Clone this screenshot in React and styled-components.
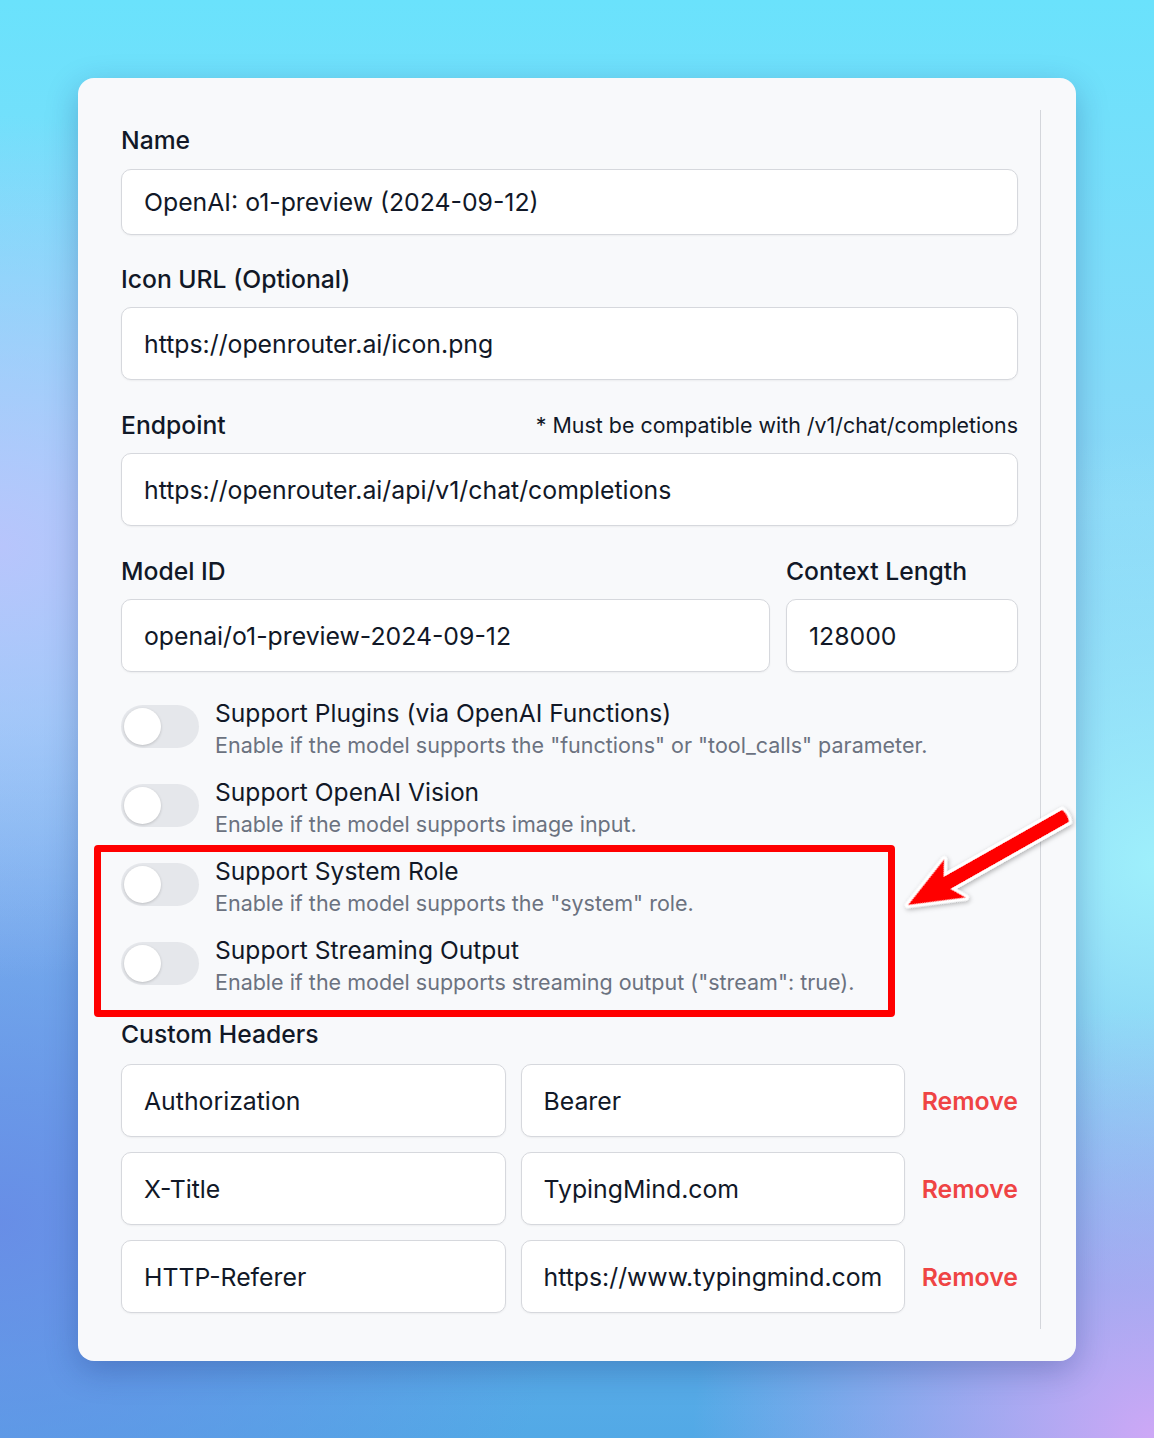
import React from 'react';
import styled, { createGlobalStyle } from 'styled-components';

const GlobalStyle = createGlobalStyle`
  * { box-sizing: border-box; }
  html, body { margin: 0; padding: 0; }
  body {
    font-family: Inter, "Noto Sans", "Liberation Sans", sans-serif;
    color: #111827;
    background:
      radial-gradient(ellipse 45% 30% at 0% 38%, rgba(186, 196, 252, 0.95), rgba(186, 196, 252, 0) 100%),
      radial-gradient(ellipse 50% 35% at 0% 85%, rgba(104, 140, 230, 0.95), rgba(104, 140, 230, 0) 100%),
      radial-gradient(ellipse 40% 30% at 100% 100%, rgba(206, 168, 246, 1), rgba(206, 168, 246, 0) 100%),
      radial-gradient(ellipse 35% 30% at 100% 60%, rgba(160, 242, 252, 0.95), rgba(160, 242, 252, 0) 100%),
      linear-gradient(180deg, #6ae2fc 0%, #8cd9f8 35%, #7cbcf0 65%, #52a9e6 100%);
  }
`;

const Page = styled.div`
  min-height: 1438px;
  padding: 78px 78px 78px;
`;

const Card = styled.div`
  position: relative;
  width: 998px;
  background: #f8f9fb;
  border-radius: 16px;
  box-shadow: 0 10px 32px rgba(20, 40, 110, 0.28);
  padding: 32px 35px 32px 43px;
  display: flex;
  gap: 22px;
`;

const Content = styled.div`
  flex: 1;
  padding: 15px 0 16px;
`;

const ScrollTrack = styled.div`
  width: 1px;
  background: #d4d6db;
`;

const Field = styled.div`
  margin-bottom: ${({ gap }) => gap ?? 29}px;
`;

const LabelRow = styled.div`
  display: flex;
  justify-content: space-between;
  align-items: center;
  margin-bottom: ${({ gap }) => gap ?? 13}px;
`;

const Label = styled.div`
  font-size: 24.7px;
  font-weight: 500;
  line-height: 30px;
  color: #111827;
`;

const Note = styled.div`
  font-size: 21.4px;
  line-height: 30px;
  color: #111827;
`;

const Input = styled.div`
  height: ${({ h }) => h ?? 73}px;
  display: flex;
  align-items: center;
  padding: 0 22px;
  background: #ffffff;
  border: 1px solid #d6d8dd;
  border-radius: 10px;
  box-shadow: 0 1px 2px rgba(0, 0, 0, 0.05);
  font-size: 24.8px;
  color: #111827;
  white-space: nowrap;
  overflow: hidden;
`;

const TwoCol = styled.div`
  display: grid;
  grid-template-columns: 1fr 232px;
  column-gap: 16px;
`;

const ToggleList = styled.div`
  display: flex;
  flex-direction: column;
  gap: 15px;
  margin-top: 26px;
`;

const Highlight = styled.div`
  position: relative;
  display: flex;
  flex-direction: column;
  gap: 15px;

  &::after {
    content: '';
    position: absolute;
    top: -11px;
    bottom: -18px;
    left: -27px;
    right: 123px;
    border: 7px solid #ff0000;
    border-radius: 4px;
    pointer-events: none;
  }
`;

const ToggleRow = styled.div`
  display: flex;
  gap: 16px;
  align-items: flex-start;
`;

const Switch = styled.div`
  flex: none;
  width: 78px;
  height: 43px;
  margin-top: 7px;
  border-radius: 22px;
  background: #e5e7eb;
  display: flex;
  align-items: center;
  padding: 0 3px;
`;

const Knob = styled.div`
  width: 37px;
  height: 37px;
  border-radius: 50%;
  background: #ffffff;
  box-shadow: 0 1px 3px rgba(0, 0, 0, 0.18);
`;

const ToggleText = styled.div`
  display: flex;
  flex-direction: column;
`;

const ToggleTitle = styled.div`
  font-size: 24.6px;
  line-height: 30px;
  color: #111827;
`;

const ToggleDesc = styled.div`
  font-size: 21.5px;
  line-height: 34px;
  color: #6b7280;
`;

const HeadersBlock = styled.div`
  margin-top: 20px;
`;

const HeaderRows = styled.div`
  display: flex;
  flex-direction: column;
  gap: 15px;
`;

const HeaderRow = styled.div`
  display: grid;
  grid-template-columns: 1fr 1fr 98px;
  column-gap: 15px;
  align-items: center;
`;

const RemoveButton = styled.button`
  border: none;
  background: none;
  padding: 0;
  font-family: inherit;
  font-size: 24.8px;
  font-weight: 600;
  color: #ef4444;
  cursor: pointer;
  text-align: right;
`;

const ArrowSvg = styled.svg`
  position: absolute;
  left: 812px;
  top: 717px;
  overflow: visible;
`;

function Toggle({ title, desc }) {
  return (
    <ToggleRow>
      <Switch>
        <Knob />
      </Switch>
      <ToggleText>
        <ToggleTitle>{title}</ToggleTitle>
        <ToggleDesc>{desc}</ToggleDesc>
      </ToggleText>
    </ToggleRow>
  );
}

function Arrow() {
  return (
    <ArrowSvg width="190" height="130" viewBox="0 0 190 130">
      <defs>
        <filter id="arrowShadow" x="-20%" y="-20%" width="140%" height="140%">
          <feDropShadow dx="0" dy="2" stdDeviation="2.5" floodColor="#000" floodOpacity="0.3" />
        </filter>
      </defs>
      <g transform="translate(18 110) rotate(-29.5)" filter="url(#arrowShadow)">
        <path
          d="M0 0 L54 -22 L45 -7 L181 -7 Q184 0 181 7 L45 7 L54 22 Z"
          fill="#ff0000"
          stroke="#ffffff"
          strokeWidth="6"
          strokeLinejoin="round"
          paintOrder="stroke"
        />
      </g>
    </ArrowSvg>
  );
}

const headers = [
  ['Authorization', 'Bearer'],
  ['X-Title', 'TypingMind.com'],
  ['HTTP-Referer', 'https://www.typingmind.com'],
];

export default function App() {
  return (
    <>
      <GlobalStyle />
      <Page>
        <Card>
          <Content>
            <Field>
              <LabelRow gap={14}>
                <Label>Name</Label>
              </LabelRow>
              <Input h={66}>OpenAI: o1-preview (2024-09-12)</Input>
            </Field>

            <Field gap={30}>
              <LabelRow>
                <Label>Icon URL (Optional)</Label>
              </LabelRow>
              <Input>https://openrouter.ai/icon.png</Input>
            </Field>

            <Field gap={30}>
              <LabelRow>
                <Label>Endpoint</Label>
                <Note>* Must be compatible with /v1/chat/completions</Note>
              </LabelRow>
              <Input>https://openrouter.ai/api/v1/chat/completions</Input>
            </Field>

            <TwoCol>
              <div>
                <LabelRow>
                  <Label>Model ID</Label>
                </LabelRow>
                <Input>openai/o1-preview-2024-09-12</Input>
              </div>
              <div>
                <LabelRow>
                  <Label>Context Length</Label>
                </LabelRow>
                <Input>128000</Input>
              </div>
            </TwoCol>

            <ToggleList>
              <Toggle
                title="Support Plugins (via OpenAI Functions)"
                desc={'Enable if the model supports the "functions" or "tool_calls" parameter.'}
              />
              <Toggle
                title="Support OpenAI Vision"
                desc="Enable if the model supports image input."
              />
              <Highlight>
                <Toggle
                  title="Support System Role"
                  desc={'Enable if the model supports the "system" role.'}
                />
                <Toggle
                  title="Support Streaming Output"
                  desc={'Enable if the model supports streaming output ("stream": true).'}
                />
              </Highlight>
            </ToggleList>

            <HeadersBlock>
              <LabelRow gap={15}>
                <Label>Custom Headers</Label>
              </LabelRow>
              <HeaderRows>
                {headers.map(([key, value]) => (
                  <HeaderRow key={key}>
                    <Input>{key}</Input>
                    <Input>{value}</Input>
                    <RemoveButton>Remove</RemoveButton>
                  </HeaderRow>
                ))}
              </HeaderRows>
            </HeadersBlock>
          </Content>
          <ScrollTrack />
          <Arrow />
        </Card>
      </Page>
    </>
  );
}
